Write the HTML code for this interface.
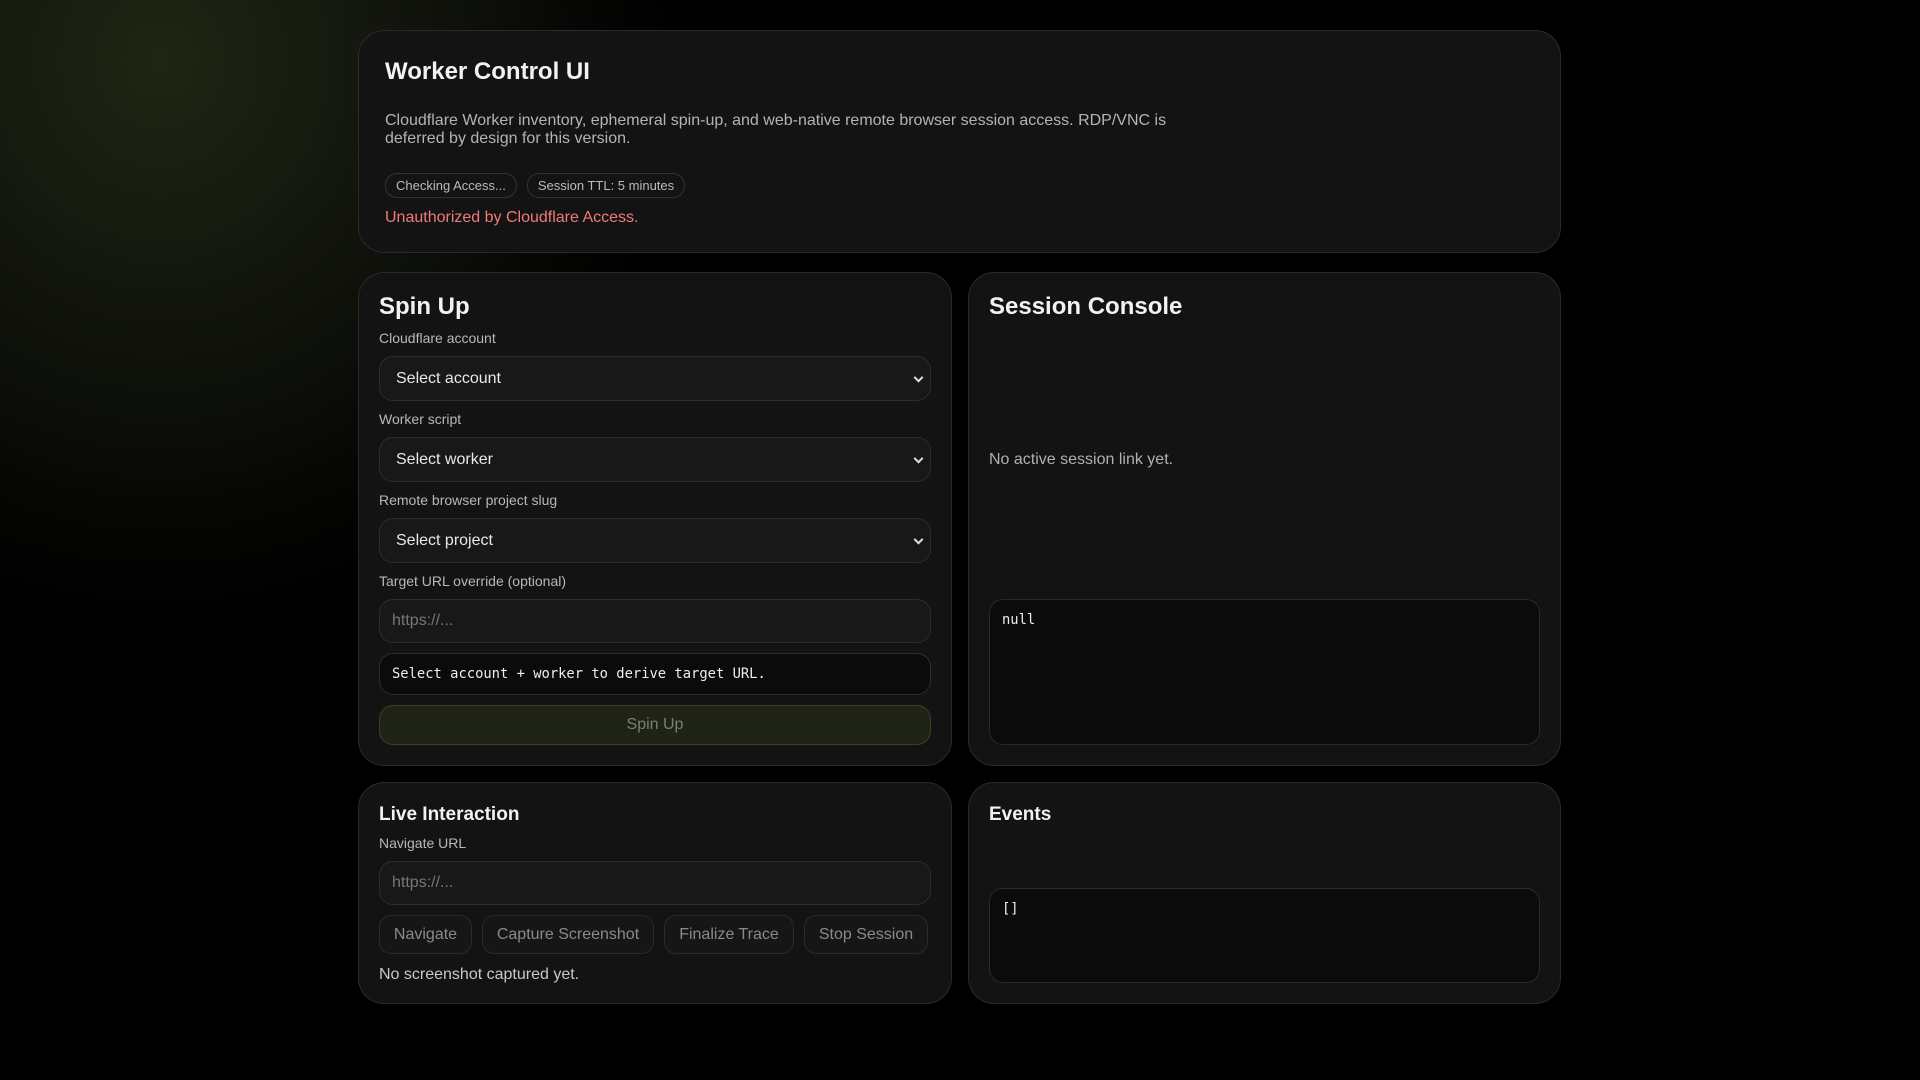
<!DOCTYPE html>
<html><head><meta charset="utf-8"><style>
*{box-sizing:border-box;margin:0;padding:0}
html,body{width:1920px;height:1080px;overflow:hidden}
body{background:radial-gradient(ellipse 520px 560px at 160px 60px,#1f2614 0%,#12150d 45%,rgba(0,0,0,0) 100%),#000;font-family:"Liberation Sans",sans-serif;color:#ececec;position:relative}
.card{position:absolute;background:#131313;border:1px solid #2a2a2a;border-radius:26px}
h1{font-size:24px;font-weight:bold;color:#f2f2f2}
h2{font-size:24px;font-weight:bold;color:#f2f2f2}
h3{font-size:19px;font-weight:bold;color:#f2f2f2}
.lbl{position:absolute;left:20px;font-size:14px;color:#b8b8b8}
.field{position:absolute;left:20px;right:20px;border:1px solid #2d2d2d;border-radius:14px;background:#181818;font-size:16px;display:flex;align-items:center;padding-left:16px}
.sel{color:#e8e8e8}
.sel::after{content:"";position:absolute;right:8px;top:50%;width:5px;height:5px;border-right:2px solid #ddd;border-bottom:2px solid #ddd;transform:translateY(-70%) rotate(45deg)}
.ph{color:#777;padding-left:12px}
.mono{font-family:"DejaVu Sans Mono","Liberation Mono",monospace;font-size:13.8px;color:#eee}
.pre{position:absolute;left:20px;right:20px;background:#0b0b0b;border:1px solid #2a2a2a;border-radius:14px;padding:12px 12px}
.pill{display:inline-block;border:1px solid #333;border-radius:12px;font-size:13px;color:#bbb;padding:4px 10px;margin-right:10px;background:#141414}
.btn{position:absolute;height:39px;border:1px solid #2a2a2a;border-radius:12px;background:#161616;color:#8a8a8a;font-size:16px;display:flex;align-items:center;justify-content:center}
</style></head><body>
<div class="card" style="left:358px;top:30px;width:1203px;height:223px">
 <h1 style="position:absolute;left:26px;top:27px">Worker Control UI</h1>
 <div style="position:absolute;left:26px;top:81px;width:800px;font-size:16px;line-height:18px;color:#b4b4b4">Cloudflare Worker inventory, ephemeral spin-up, and web-native remote browser session access. RDP/VNC is deferred by design for this version.</div>
 <div style="position:absolute;left:26px;top:142px"><span class="pill">Checking Access...</span><span class="pill">Session TTL: 5 minutes</span></div>
 <div style="position:absolute;left:26px;top:178px;font-size:16px;color:#f07a7a">Unauthorized by Cloudflare Access.</div>
</div>

<div class="card" style="left:358px;top:272px;width:594px;height:494px">
 <h2 style="position:absolute;left:20px;top:20px">Spin Up</h2>
 <div class="lbl" style="top:57px">Cloudflare account</div>
 <div class="field sel" style="top:83px;height:45px">Select account</div>
 <div class="lbl" style="top:138px">Worker script</div>
 <div class="field sel" style="top:164px;height:45px">Select worker</div>
 <div class="lbl" style="top:219px">Remote browser project slug</div>
 <div class="field sel" style="top:245px;height:45px">Select project</div>
 <div class="lbl" style="top:300px">Target URL override (optional)</div>
 <div class="field ph" style="top:326px;height:44px">https://...</div>
 <div class="field mono" style="top:380px;height:42px;background:#0b0b0b;padding-left:12px">Select account + worker to derive target URL.</div>
 <div class="field" style="top:432px;height:40px;background:#1f2417;border-color:#3a4222;color:#7b7f74;justify-content:center;padding:0">Spin Up</div>
</div>

<div class="card" style="left:968px;top:272px;width:593px;height:494px">
 <h2 style="position:absolute;left:20px;top:20px">Session Console</h2>
 <div style="position:absolute;left:20px;top:178px;font-size:16px;color:#b0b0b0">No active session link yet.</div>
 <div class="pre mono" style="top:326px;height:146px">null</div>
</div>

<div class="card" style="left:358px;top:782px;width:594px;height:222px">
 <h3 style="position:absolute;left:20px;top:21px">Live Interaction</h3>
 <div class="lbl" style="top:52px">Navigate URL</div>
 <div class="field ph" style="top:78px;height:44px">https://...</div>
 <div class="btn" style="left:20px;width:93px;top:132px">Navigate</div>
 <div class="btn" style="left:123px;width:172px;top:132px">Capture Screenshot</div>
 <div class="btn" style="left:305px;width:130px;top:132px">Finalize Trace</div>
 <div class="btn" style="left:445px;width:124px;top:132px">Stop Session</div>
 <div style="position:absolute;left:20px;top:183px;font-size:16px;color:#c8c8c8">No screenshot captured yet.</div>
</div>

<div class="card" style="left:968px;top:782px;width:593px;height:222px">
 <h3 style="position:absolute;left:20px;top:21px">Events</h3>
 <div class="pre mono" style="top:105px;height:95px">[]</div>
</div>
</body></html>
